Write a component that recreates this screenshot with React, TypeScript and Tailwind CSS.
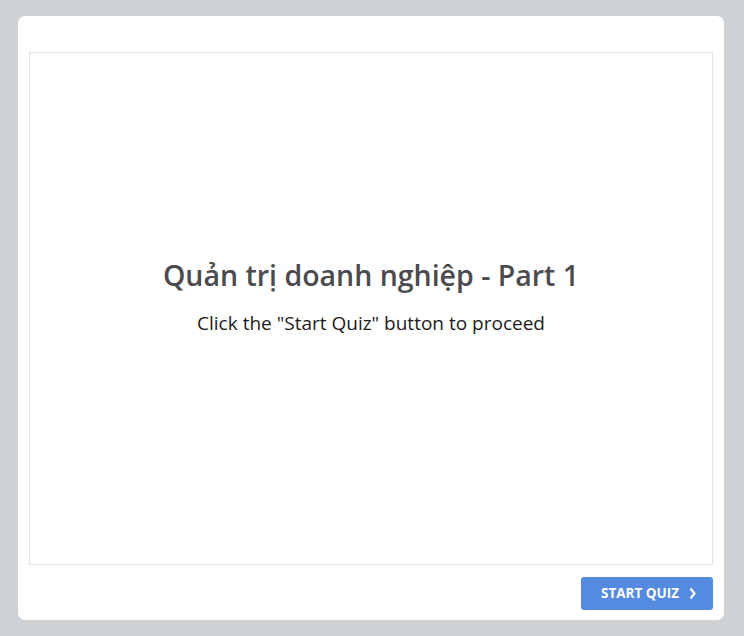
import React from "react";

export default function App() {
  return (
    <div className="w-[744px] h-[636px] bg-[#cfd2d5] pt-[16px] pl-[18px]" style={{ fontFamily: '"Open Sans", sans-serif' }}>
      <div className="w-[706px] h-[604px] bg-white rounded-[7px] pt-[36px] px-[11px] flex flex-col">
        <div className="h-[513px] border border-[#e3e3e3] flex flex-col items-center pt-[202px]">
          <h1 className="text-[28.5px] leading-[40px] font-semibold text-[#4b4b4f]">Quản trị doanh nghiệp - Part 1</h1>
          <p className="mt-[14px] text-[19px] leading-[28px] text-[#1c1c1c]">Click the "Start Quiz" button to proceed</p>
        </div>
        <div className="flex justify-end mt-[12px]">
          <button className="w-[132px] h-[33px] rounded-[3px] bg-[#548be0] text-white text-[13.5px] font-bold flex items-center justify-center gap-[9px] pl-[4px]">
            <span>START QUIZ</span>
            <svg width="9" height="13" viewBox="0 0 9 13" fill="none">
              <path d="M2.5 1.5L6.5 6.5L2.5 11.5" stroke="white" strokeWidth="2.2" />
            </svg>
          </button>
        </div>
      </div>
    </div>
  );
}
